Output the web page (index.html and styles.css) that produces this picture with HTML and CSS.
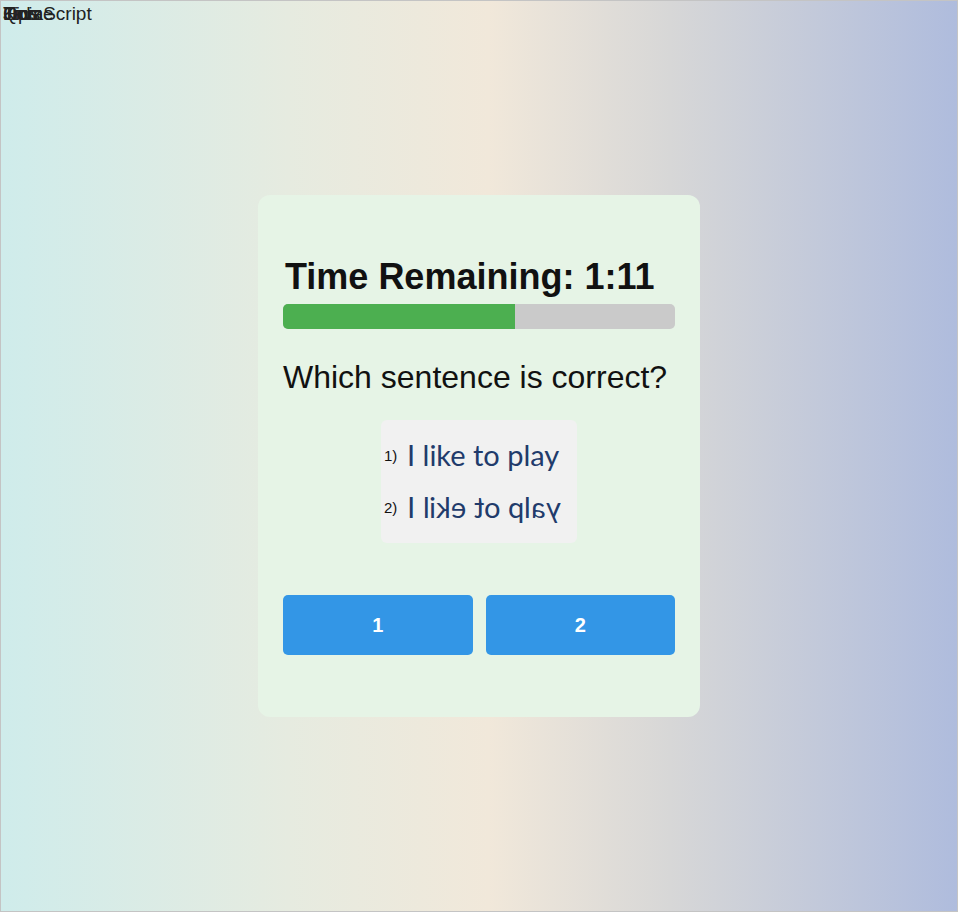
FILE: index.html
```html
<!DOCTYPE html>
<html lang="en">
<head>
<meta charset="utf-8">
<title>Quiz</title>
<link rel="stylesheet" href="styles.css">
</head>
<body>
<div class="frame">
  <nav class="nav">
    <span class="nav-item">Home</span>
    <span class="nav-item">Tips</span>
    <span class="nav-item">Quiz</span>
    <span class="nav-item">Kids</span>
    <span class="nav-item">JavaScript</span>
  </nav>
  <main class="card">
    <h1 class="timer">Time Remaining: 1:11</h1>
    <div class="bar"><div class="bar-fill" style="width:59.2%"></div></div>
    <p class="question">Which sentence is correct?</p>
    <div class="sentences">
      <div class="sentence"><span class="num">1)</span><span class="words">I like to play</span></div>
      <div class="sentence"><span class="num">2)</span><span class="words"><span class="m">I</span> <span class="m">l</span><span class="m">i</span><span class="m">k</span><span class="m">e</span> <span class="m">t</span><span class="m">o</span> <span class="m">p</span><span class="m">l</span><span class="m">a</span><span class="m">y</span></span></div>
    </div>
    <div class="answers">
      <button class="answer">1</button>
      <button class="answer">2</button>
    </div>
  </main>
</div>
</body>
</html>
```
FILE: styles.css
```css
html, body {
  margin: 0;
  padding: 0;
}
body {
  font-family: "Liberation Sans", Arial, sans-serif;
  color: #111;
}
.frame {
  position: relative;
  box-sizing: border-box;
  width: 958px;
  height: 912px;
  border: 1px solid #c4c4c4;
  background: linear-gradient(90deg, #cfeceb 0%, #e6ebe0 30%, #f1e8da 51%, #d7d7d7 70%, #afbcdd 100%);
  display: flex;
  align-items: center;
  justify-content: center;
}
.nav {
  position: absolute;
  left: 2px;
  top: 2px;
  display: grid;
  font-size: 19px;
  color: #222;
}
.nav-item {
  grid-area: 1 / 1;
}
.card {
  box-sizing: border-box;
  width: 442px;
  height: 522px;
  background: #e6f4e6;
  border-radius: 12px;
  padding: 60px 25px 25px;
}
.timer {
  margin: 0;
  font-size: 36px;
  line-height: 44px;
  font-weight: bold;
  color: #111;
  padding-left: 2px;
}
.bar {
  margin-top: 5px;
  height: 25px;
  background: #cacaca;
  border-radius: 5px;
  overflow: hidden;
}
.bar-fill {
  height: 100%;
  background: #4caf50;
}
.question {
  margin: 28px 0 0;
  font-size: 32px;
  line-height: 40px;
  color: #111;
}
.sentences {
  width: 196px;
  height: 123px;
  margin: 23px auto 0;
  box-sizing: border-box;
  background: #f1f1f1;
  border-radius: 6px;
  padding: 17px 0 0 0;
}
.sentence {
  display: flex;
  align-items: baseline;
  height: 52px;
}
.num {
  font-family: "Liberation Sans", sans-serif;
  font-size: 15px;
  color: #111;
  width: 23px;
  padding-left: 3px;
  text-align: left;
  transform: translateY(-5px);
}
.words {
  font-family: "Lato", "Open Sans", sans-serif;
  font-size: 29px;
  color: #213b6b;
}
.m {
  display: inline-block;
  transform: scaleX(-1);
}
.answers {
  display: grid;
  grid-template-columns: 1fr 1fr;
  gap: 13px;
  margin-top: 52px;
}
.answer {
  height: 60px;
  border: none;
  border-radius: 5px;
  background: #3396e6;
  color: #fff;
  font-family: "Liberation Sans", Arial, sans-serif;
  font-size: 20px;
  font-weight: bold;
}
```
